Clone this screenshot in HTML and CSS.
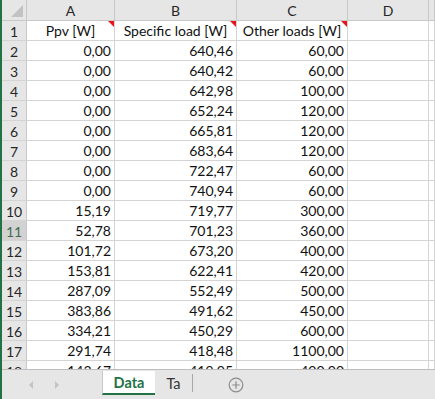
FILE: index.html
```html
<!DOCTYPE html>
<html lang="en">
<head>
    <meta charset="UTF-8">
    <meta name="viewport" content="width=device-width, initial-scale=1.0">
    <title>Data</title>
    <link rel="stylesheet" href="styles.css">
</head>
<body>
    <div id="window">
        <div class="sheet">
            <div class="corner"><span class="corner-tri"></span></div>
            <div class="colhead">A</div>
            <div class="colhead">B</div>
            <div class="colhead">C</div>
            <div class="colhead">D</div>
            <div class="colhead"></div>

            <div class="rowhead">1</div>
            <div class="cell center">Ppv [W]<span class="note"></span></div>
            <div class="cell center">Specific load [W]<span class="note"></span></div>
            <div class="cell center">Other loads [W]<span class="note"></span></div>
            <div class="cell"></div>
            <div class="cell"></div>
        </div>
        <div class="tabbar">
            <div class="nav">
                <span class="arrow left"></span>
                <span class="arrow right"></span>
            </div>
            <div class="tab active">Data</div>
            <div class="tab">Ta</div>
            <div class="addsheet">
                <svg width="16" height="16" viewBox="0 0 16 16">
                    <circle cx="8" cy="8" r="6.8" fill="none" stroke="#8c8c8c" stroke-width="1.2"/>
                    <path d="M8 4.3v7.4M4.3 8h7.4" stroke="#8c8c8c" stroke-width="1.2"/>
                </svg>
            </div>
        </div>
    </div>

    <script>
        const rows=[
            ["0,00","640,46","60,00"],
            ["0,00","640,42","60,00"],
            ["0,00","642,98","100,00"],
            ["0,00","652,24","120,00"],
            ["0,00","665,81","120,00"],
            ["0,00","683,64","120,00"],
            ["0,00","722,47","60,00"],
            ["0,00","740,94","60,00"],
            ["15,19","719,77","300,00"],
            ["52,78","701,23","360,00"],
            ["101,72","673,20","400,00"],
            ["153,81","622,41","420,00"],
            ["287,09","552,49","500,00"],
            ["383,86","491,62","450,00"],
            ["334,21","450,29","600,00"],
            ["291,74","418,48","1100,00"],
            ["143,67","419,05","400,00"]
        ]

        const sheet=document.querySelector(".sheet")

        rows.forEach((r,i)=>{
            const n=i+2
            let html=`<div class="rowhead${n===11?" selected":""}">${n}</div>`
            r.forEach(v=>{
                html+=`<div class="cell">${v}</div>`
            })
            html+=`<div class="cell"></div><div class="cell"></div>`
            sheet.insertAdjacentHTML("beforeend",html)
        })
    </script>
</body>
</html>
```

FILE: styles.css
```css
*{
    padding: 0;
    margin: 0;
    box-sizing: border-box;
}
body{
    width: 435px;
    height: 399px;
    overflow: hidden;
    background-color: #ffffff;
    font-family: "Lato", "Liberation Sans", sans-serif;
    font-size: 14px;
    color: #111;
}
#window{
    height: 399px;
    border-left: 2px solid #217346;
    display: flex;
    flex-direction: column;
}
.sheet{
    height: 369px;
    overflow: hidden;
    display: grid;
    grid-template-columns: 25px 88px 122px 111px 81px 1fr;
    grid-template-rows: 21px;
    grid-auto-rows: 20px;
}
.corner,
.colhead,
.rowhead{
    background-color: #e6e6e6;
    color: #262626;
    border-right: 1px solid #c8c8c8;
    border-bottom: 1px solid #c8c8c8;
    display: flex;
    align-items: center;
    justify-content: center;
}
.corner{
    position: relative;
}
.corner-tri{
    position: absolute;
    right: 3px;
    bottom: 3px;
    width: 0;
    height: 0;
    border-left: 12px solid transparent;
    border-bottom: 12px solid #c2c2c2;
}
.rowhead{
    border-bottom-color: #d4d4d4;
    padding-top: 1px;
}
.rowhead.selected{
    background-color: #d2d2d2;
    color: #3f6d51;
}
.cell{
    position: relative;
    border-right: 1px solid #d4d4d4;
    border-bottom: 1px solid #d4d4d4;
    text-align: right;
    padding: 1px 3px 0 0;
    line-height: 18px;
    white-space: nowrap;
}
.cell.center{
    text-align: center;
    padding-right: 0;
}
.note{
    position: absolute;
    top: 0;
    right: 0;
    width: 0;
    height: 0;
    border-left: 6px solid transparent;
    border-top: 6px solid #e8141c;
}
.tabbar{
    flex: 1;
    background-color: #e6e6e6;
    border-top: 1px solid #bdbdbd;
    display: flex;
    align-items: stretch;
}
.nav{
    width: 100px;
    display: flex;
    align-items: center;
    padding-left: 27px;
    gap: 22px;
}
.arrow{
    width: 0;
    height: 0;
    border-top: 4px solid transparent;
    border-bottom: 4px solid transparent;
}
.arrow.left{
    border-right: 4px solid #c4c4c4;
}
.arrow.right{
    border-left: 4px solid #c4c4c4;
}
.tab{
    height: 24px;
    display: flex;
    align-items: center;
    justify-content: center;
    font-size: 14.5px;
    color: #333;
}
.tab.active{
    width: 53px;
    margin-top: 1px;
    background-color: #ffffff;
    border-left: 1px solid #c8c8c8;
    border-bottom: 2px solid #217346;
    color: #217346;
    font-weight: bold;
}
.tab:not(.active){
    width: 38px;
    margin-top: 4px;
    height: 18px;
    border-right: 1px solid #a8a8a8;
}
.addsheet{
    padding-left: 35px;
    display: flex;
    align-items: center;
}
```
